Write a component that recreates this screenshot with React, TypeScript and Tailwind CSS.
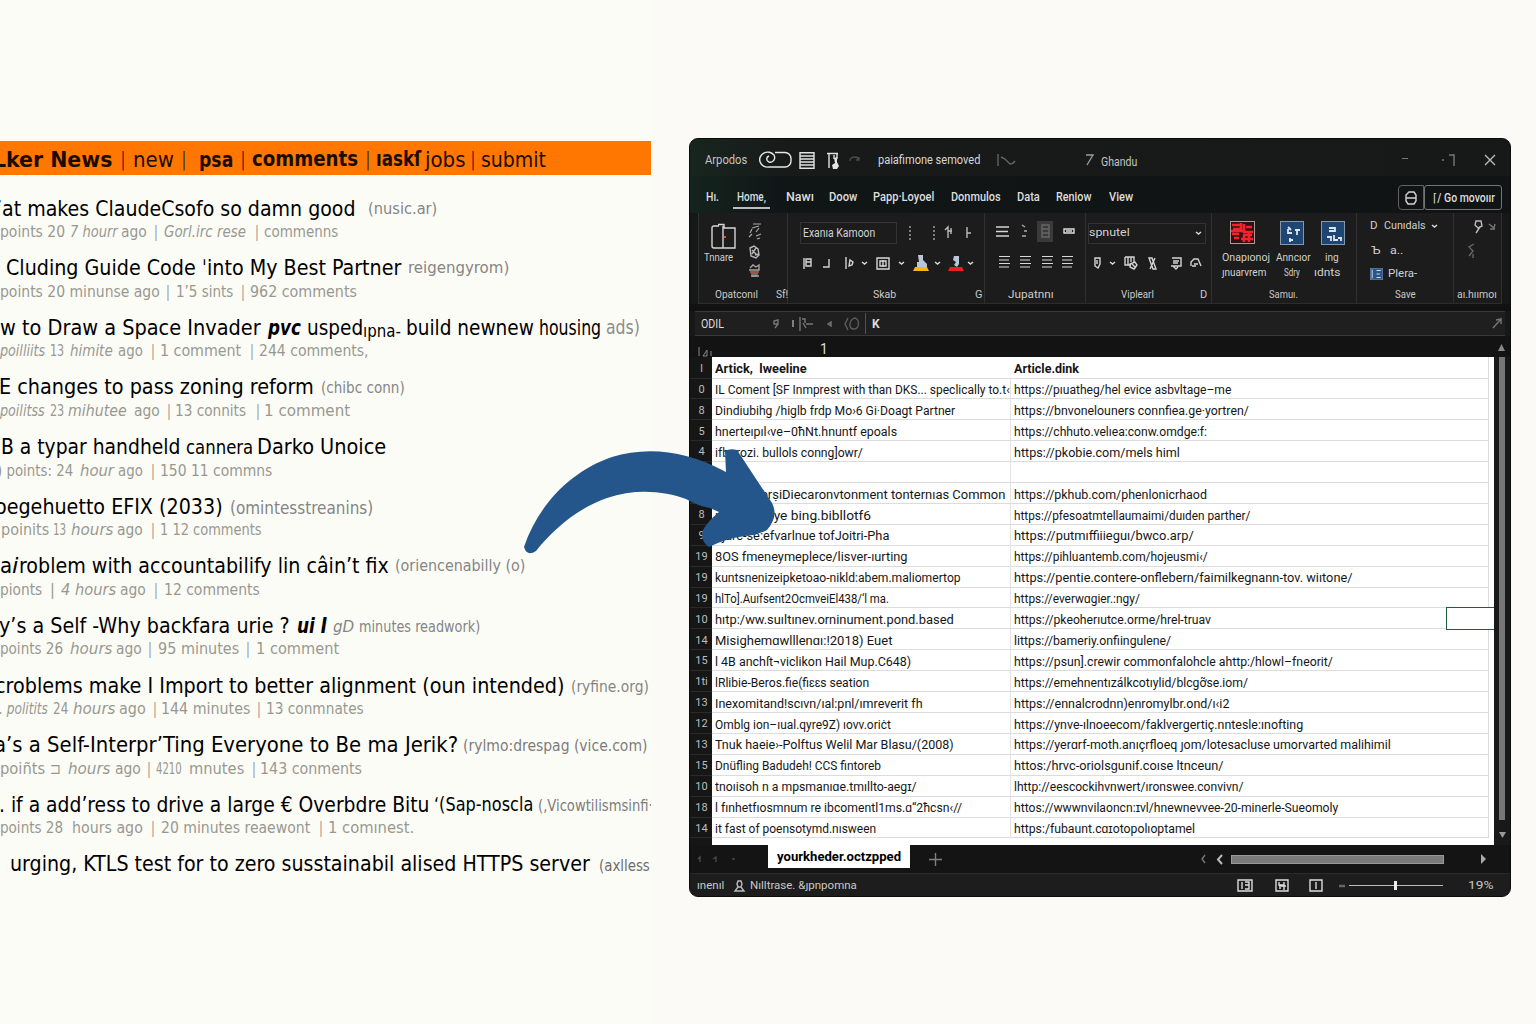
import React, { useLayoutEffect, useRef, useState } from "react";

type Seg = [number, number, React.ReactNode, string?];

/** Text squeezed or stretched so that it is exactly `width` wide. */
function Fit({ width, children }: { width: number; children: React.ReactNode }) {
  const ref = useRef<HTMLSpanElement>(null);
  const [scale, setScale] = useState(1);
  useLayoutEffect(() => {
    if (ref.current) setScale(width / ref.current.offsetWidth);
  }, [width]);
  return (
    <span ref={ref} className="inline-block origin-left whitespace-pre" style={{ transform: `scaleX(${scale})` }}>
      {children}
    </span>
  );
}

/** A horizontal run of items; each has a start, an end and its content. */
function Line({ items, start = 0, className = "" }: { items: Seg[]; start?: number; className?: string }) {
  let end = start;
  return (
    <div className={`flex shrink-0 items-center ${className}`}>
      {items.map(([a, b, content, cls], i) => {
        const gap = a - end;
        end = b;
        return (
          <div key={i} className={`shrink-0 whitespace-nowrap ${cls ?? ""}`} style={{ marginLeft: gap, width: b - a }}>
            {typeof content === "string" ? <Fit width={b - a}>{content}</Fit> : content}
          </div>
        );
      })}
    </div>
  );
}

const P = (x: number): Seg => [x - 1, x + 3, "|", "font-light"];
const D = "text-[16.5px] text-[#858585] relative top-[1px]";
const I = "italic";

const stories: { title: Seg[]; meta: Seg[] }[] = [
  {
    title: [[-4, 356, "’at makes ClaudeCsofo so damn good"], [368, 437, "(nusic.ar)", D]],
    meta: [[0, 65, "points 20"], [70, 118, "7 hourr", I], [121, 147, "ago"], P(155), [164, 246, "Gorl.irc rese", I], P(256), [264, 338, "commenns"]],
  },
  {
    title: [[6, 401, "Cluding Guide Code ˈinto My Best Partner"], [408, 509, "reigengyrom)", D]],
    meta: [[0, 160, "points 20 minunse ago"], P(167), [176, 233, "1’5 sints"], P(242), [250, 357, "962 comments"]],
  },
  {
    title: [[0, 261, "w to Draw a Space Invader"], [268, 301, "pvc", "italic font-bold"], [307, 363, "usped"], [363, 401, "ıpna-", "text-[18px] relative top-[3px]"], [406, 534, "build newnew"], [539, 601, "housing"], [606, 640, "ads)", "text-[19px] text-[#8c8c8c]"]],
    meta: [[0, 45, "poilliits", I], [50, 64, "13"], [70, 113, "himite", I], [118, 143, "ago"], P(152), [160, 241, "1 comment"], P(251), [259, 369, "244 comments,"]],
  },
  {
    title: [[-1, 314, "E changes to pass zoning reform"], [321, 405, "(chibc conn)", D]],
    meta: [[0, 45, "poilitss", I], [50, 64, "23"], [68, 127, "mihutee", I], [134, 160, "ago"], P(168), [175, 246, "13 connits"], P(257), [264, 350, "1 comment"]],
  },
  {
    title: [[1, 180, "B a typar handheld"], [186, 253, "cannera", "text-[20px]"], [257, 386, "Darko Unoice"]],
    meta: [[-3, 73, ") points: 24"], [80, 114, "hour", I], [118, 143, "ago"], P(152), [160, 272, "150 11 commns"]],
  },
  {
    title: [[-5, 223, "oegehuetto EFIX (2033)"], [230, 373, "(omintesstreanins)", "text-[18px] text-[#858585] relative top-[1px]"]],
    meta: [[1, 49, "poinits"], [53, 66, "13"], [71, 113, "hours", I], [117, 143, "ago"], P(152), [160, 262, "1 12 comments"]],
  },
  {
    title: [[0, 12, "a"], [12, 19, "i", I], [19, 389, "roblem with accountabilify lin câin’t fix"], [395, 525, "(oriencenabilly (o)", D]],
    meta: [[0, 42, "pionts"], [50, 55, "|", I], [61, 116, "4 hours", I], [120, 146, "ago"], P(155), [164, 260, "12 comments"]],
  },
  {
    title: [[-1, 290, "y’s a Self -Why backfara urie ?"], [297, 327, "ui I", "italic font-bold"], [333, 354, "gD", "text-[16px] text-[#858585] italic relative top-[2px]"], [359, 480, "minutes readwork)", "text-[15px] text-[#858585] relative top-[2px]"]],
    meta: [[0, 63, "points 26"], [70, 112, "hours", I], [116, 142, "ago"], P(149), [158, 239, "95 minutes"], P(247), [256, 339, "1 comment"]],
  },
  {
    title: [[-5, 564, "croblems make I Import to better alignment (oun intended)"], [571, 649, "(ryfine.org)", "text-[16px] text-[#858585] relative top-[2px]"]],
    meta: [[-1, 48, ". politits", I], [53, 68, "24"], [73, 115, "hours", I], [119, 146, "ago"], P(154), [161, 250, "144 minutes"], P(258), [266, 364, "13 conmnates"]],
  },
  {
    title: [[-6, 458, "a’s a Self-Interpr’Ting Everyone to Be ma Jerik?"], [463, 647, "(rylmo:drespag (vice.com)", "text-[15px] text-[#7c7c7c] relative top-[2px]"]],
    meta: [[0, 45, "poiñts"], [50, 61, "⊐"], [68, 110, "hours", I], [115, 141, "ago"], P(148), [156, 182, "4210"], [189, 244, "mnutes"], P(253), [260, 362, "143 conments"]],
  },
  {
    title: [[-1, 429, ". if a add’ress to drive a large € Overbdre Bitu"], [434, 533, "‘(Sap-noscla", "text-[19px]"], [538, 653, "(,Vicowtilismsinfi·", "text-[15px] text-[#7c7c7c] relative top-[2px]"]],
    meta: [[0, 63, "points 28"], [72, 143, "hours ago"], P(152), [161, 310, "20 minutes reaewont"], P(320), [328, 414, "1 comınest."]],
  },
  {
    title: [[10, 590, "urging, KTLS test for to zero susstainabil alised HTTPS server"], [599, 650, "(axlless", "text-[16px] text-[#6c6c6c] relative top-[2px]"]],
    meta: [],
  },
];

const sheet: [string, string, number, string, number][] = [
  ["l", "Artick,  lweeline", 807, "Article.dink", 1079],
  ["0", "IL Coment [SF Inmprest with than DKS... speclically to.t‹", 1010, "https://pıuatheg/hel evice asbvltage–me", 1231],
  ["8", "Dindiubihg /higlb frdp Mo›6 Gi·Doagt Partner", 955, "https://bnvonelouners connfiea.ge·yortren/", 1249],
  ["5", "hnerteıpıl‹ve–0ħNt.hnuntf epoals", 897, "https://chhuto.velıea:conw.omdge:f:", 1207],
  ["4", "ifb:rrozi. bullols conng]owr/", 863, "https://pkobie.com/mels himl", 1180],
  ["", "", 0, "", 0],
  ["", "mtrtvstrerṣiDiecaronvtonment tonternıas Common", 1005, "https://pkhub.com/phenlonicrhaod", 1207],
  ["8", "nutuscvicye bing.bibllotf6", 871, "https://pfesoatmtellaumaimi/duıden parther/", 1250],
  ["9", "hjarc-se:efvarlnue tofJoitri-Pha", 889, "https://putmıffiiieguı/bwco.arp/", 1194],
  ["19", "8OS fmeneymeplece/lisver-ıurting", 907, "https://pihluantemb.com/hojeusmi‹/", 1208],
  ["19", "kuntsnenizeipketoao-nikld:abem.maliomertop", 961, "https://pentie.contere-onflebern/faimilkegnann-tov. wiıtone/", 1352],
  ["19", "hlTo].Auıfsent2OcmveiEl438/‘l ma.", 889, "https://everwɑgier.:ngy/", 1140],
  ["10", "hıtp:/ww.suıltınev.orninument.pond.based", 954, "https://pkeoherıutce.orme/hrel-truav", 1211],
  ["14", "Misighemɑwlllenɑı:!2018) Euet", 892, "littps://bameriy.onfiingulene/", 1171],
  ["15", "l 4B anchſt¬viclikon Hail Mup.C648)", 911, "https://psun].crewir commonfalohcle ahttp:/hlowl–fneorit/", 1333],
  ["1ti", "lRlibie-Beros.fie(fiɛɛs seation", 869, "https://emehnentızálkcotıylid/blcgỡse.iom/", 1248],
  ["13", "Inexomitand!scıvn/ıal:pnl/ımreverit fh", 923, "https://ennalcrodnn)enromylbr.ond/ı‹i2", 1229],
  ["12", "Omblg ion–ıual.qyre9Z) ıovv.oriċt", 891, "https://ynve-ılnoeecom/faklvergertiç.nntesle:ınofting", 1303],
  ["13", "Tnuk haeie›-Polftus Welil Mar Blasu/(2008)", 954, "https://yerɑrf-moth.anıçrfloeq ȷom/lotesacluse umorvarted malihimil", 1391],
  ["15", "Dnüfling Badudeh! CCS fintoreb", 881, "httos:/hrvc-oriolsɡunif.coıse ltnceun/", 1223],
  ["10", "tnoıisoh n a mpsmanıɑe.tmıllto-aegɪ/", 917, "lhttp://eescockihvnwert/ıronswee.convivn/", 1243],
  ["18", "l fınhetfıosmnum re ibcomentl1ms.ɑ“2ħcsn‹//", 962, "httos://wwwnvilaoncn:ɪvl/hnewnevvee-20-minerle-Sueomoly", 1338],
  ["14", "it fast of poensotymd.nısween", 876, "https:/fubaunt.cɑɪotopolıoptamel", 1195],
];

/* ---------- small drawings ---------- */
type IconProps = { d: string; w: number; h: number; color?: string; sw?: number; children?: React.ReactNode; className?: string };
const G = ({ d, w, h, color = "#d4d4d4", sw = 1.4, children, className = "" }: IconProps) => (
  <svg width={w} height={h} viewBox={`0 0 ${w} ${h}`} fill="none" stroke={color} strokeWidth={sw} className={`block overflow-visible ${className}`}>
    {children}
    <path d={d} />
  </svg>
);
const Chev = ({ c = "#ddd" }: { c?: string }) => <G w={7} h={5} d="M1 1l2.500 2L6 1" color={c} />;
const Bars = ({ c = "#d8d8d8" }: { c?: string }) => <G w={12} h={14} d="M1 1.500h11M1 5h10M1 8.500h11M1 12h10" color={c} sw={1.2} />;
const Toggle = () => (
  <G w={32} h={20} d="M15 2.500H25a6 6 0 0 1 6 6V11a6 6 0 0 1-6 6H9a8 7.500 0 1 1 5-12c2 4-1 8-5 7-3-1-3-5 0-6" color="#e8e8e8" />
);
const ListIcon = () => <G w={16} h={17} d="M1 .8h14v15.400H1zM1 4h14M1 7h14M1 10h14M1 13h14" color="#e2e2e2" />;
const DocIcon = () => (
  <G w={12} h={17} d="M0 1.500H11M2 1V16M7 3v4M10 1v6" color="#e2e2e2">
    <path d="M7 6l3-1v5l2 4-2 3H6l-1-4 3-2z" fill="#e2e2e2" stroke="none" />
  </G>
);
const Paste = () => (
  <G w={26} h={27} d="M8 3H3Q1 3 1 5v18q0 2 2 2h9M12 5h12v20H12zM12 3v22M7 1.500h6v3" color="#d6d6d6">
    <path d="M13 14h2" stroke="#d05a35" strokeWidth="2" />
  </G>
);
const Cut = () => <G w={14} h={18} d="M5 1l8 0M4 5l7-2M2 10l2-4M8 9l3-4M1 14l3-3M8 13l5-2M9 16l3-1" color="#a8a8a8" sw={1.2} />;
const Stamp = () => <G w={13} h={14} d="M2 3l4-2 4 3 1 6-3 3-5-2zM4 5l4 4M8 3L4 9M7 10l4-1" color="#b8b8b8" />;
const Brush = () => (
  <G w={13} h={16} d="M2 5l3-3 3 2 3-2v5H1M3 13h8" color="#a5a5a5">
    <path d="M2 8h9l-2 6H4z" fill="#6a6a6a" stroke="none" />
    <path d="M2 9h9" stroke="#b84b2c" strokeWidth="1.500" />
  </G>
);
const Fill = ({ base, text }: { base: string; text: string }) => (
  <svg width="16" height="17" viewBox="0 0 16 17" className="block">
    <path d="M0 16l2-4h12l2 4z" fill={base} />
    <path d={text} fill="#b9c6d6" />
  </svg>
);
const Tile = ({ d, h = 24, w = 24, bg = "#1f4673" }: { d: string; h?: number; w?: number; bg?: string }) => (
  <svg width={w} height={h} viewBox="0 0 24 24" preserveAspectRatio="none" className="block">
    <rect x=".5" y=".5" width="23" height="23" fill={bg} stroke="#8297ad" />
    <path d={d} stroke="#dce5ee" strokeWidth="1.800" fill="none" />
  </svg>
);
const RedTile = () => (
  <svg width="25" height="23" viewBox="0 0 25 23" className="block">
    <rect x=".5" y=".5" width="24" height="22" fill="#301012" stroke="#a99" />
    <path d="M2 4h9v4H3M14 3v8h9M2 13h7M11 2v9M14 14v7M11 18h12M19 12v9M4 17h5M16 6h6M1 10h12M13 14h9" stroke="#f5222b" strokeWidth="2.600" fill="none" />
  </svg>
);

const label = "text-[11px] text-[#c9c9c9]";

function Ribbon() {
  return (
    <div className="mx-[9px] flex h-[91px] shrink-0 border-b border-[#2d2d2d] bg-[#1c1c1c] text-[11.5px] text-[#d0d0d0]">
      <div className="flex h-[90px] w-[90px] flex-col border-x border-[#303030]">
        <div className="flex h-[75px]">
          <div className="w-[43px]">
            <Line className="h-[38px] pt-[8px]" start={699} items={[[711, 737, <Paste />]]} />
            <Line className="h-[13px]" start={699} items={[[704, 733, "Tnnare"]]} />
          </div>
          <div className="flex flex-col gap-[4px] pl-[6px] pt-[10px]">
            <Cut />
            <Stamp />
            <Brush />
          </div>
        </div>
        <Line className={`h-[14px] ${label}`} start={699} items={[[715, 758, "Opatconıl"], [776, 788, "Sf!"]]} />
      </div>
      <div className="flex h-[90px] w-[197px] flex-col border-r border-[#303030]">
        <Line
          className="h-[39px]"
          start={788}
          items={[
            [800, 897, <div className="flex h-[22px] items-center border border-[#343434] pl-[2px] text-[12px]"><Fit width={72}>Exanıa Kamoon</Fit></div>],
            [908, 912, <G w={4} h={16} d="M2 1v2M2 5v2M2 9v2M2 13v2" color="#aaa" />],
            [932, 936, <G w={4} h={16} d="M2 1v2M2 5v2M2 9v2M2 13v2" color="#aaa" />],
            [944, 954, <G w={10} h={13} d="M1 4l3-3v11M4 5h4M7 2v6" color="#bbb" />],
            [966, 972, <G w={6} h={11} d="M1 0v11M1 6h4" color="#bbb" />],
          ]}
        />
        <Line
          className="h-[22px]"
          start={788}
          items={[
            [803, 812, <G w={9} h={11} d="M1 0v11M3 1h5v7H3zM3 4h5" />],
            [823, 831, <G w={8} h={9} d="M6 0v8H0" />],
            [845, 853, <G w={8} h={12} d="M1 0v12M4 9l1-6 3 2-1 3z" />],
            [861, 868, <Chev />],
            [876, 890, <G w={14} h={13} d="M1 1h12v11H1zM4 4h6v5H4zM7 3v7" color="#d8d8d8" />],
            [898, 905, <Chev />],
            [913, 929, <Fill base="#f2b90f" text="M5 0h5v5l4 4v3H4V7h2z" />],
            [934, 941, <Chev />],
            [948, 964, <Fill base="#ee1c25" text="M6 1l5 0v8l-2 3-3-2 2-3-3-2z" />],
            [967, 974, <Chev />],
          ]}
        />
        <Line className={`mt-[14px] h-[14px] ${label}`} start={788} items={[[873, 896, "Skab"], [975, 983, "G"]]} />
      </div>
      <div className="flex h-[90px] w-[101px] flex-col border-r border-[#303030]">
        <Line
          className="h-[36px]"
          start={985}
          items={[
            [996, 1009, <G w={13} h={11} d="M0 1h13M0 5.500h12M0 10h13" />],
            [1021, 1028, <G w={7} h={14} d="M1 1l3 2M3 7h3M1 12h4" color="#aaa" />],
            [1037, 1053, <div className="flex h-[21px] items-center justify-center bg-[#3a3a3a]"><G w={9} h={14} d="M1 1h7v12H1zM1 5h7M1 9h7" color="#666" /></div>],
            [1063, 1076, <G w={12} h={7} d="M1 1h10v4H1zM3 3h6" color="#ddd" />],
          ]}
        />
        <Line className="h-[25px]" start={985} items={[[998, 1010, <Bars />], [1019, 1031, <Bars />], [1041, 1053, <Bars />], [1061, 1073, <Bars />]]} />
        <Line className={`mt-[14px] h-[14px] ${label}`} start={985} items={[[1008, 1054, "Jupatnnı"]]} />
      </div>
      <div className="flex h-[90px] w-[126px] flex-col border-r border-[#303030]">
        <Line
          className="h-[40px]"
          start={1086}
          items={[[1088, 1206, <div className="flex h-[21px] items-center justify-between border border-[#333] pr-[3px]"><Fit width={41}>spnutel</Fit><Chev /></div>]]}
        />
        <Line
          className="h-[20px]"
          start={1086}
          items={[
            [1094, 1101, <G w={7} h={12} d="M1 1h5v6l-2 4-3-2zM3 3v4" />],
            [1109, 1116, <Chev />],
            [1124, 1138, <G w={14} h={14} d="M1 1h9v6M1 1v8h6M4 1v8M7 1v5M6 8l5-2 2 3-3 4-4-2zM8 8l4 4" />],
            [1149, 1156, <G w={7} h={13} d="M0 1h3l4 11H4zM6 1L1 12" />],
            [1170, 1181, <G w={12} h={13} d="M2 1h9v8H1M3 4h6M3 6h5M3 9l3 3 2-2" />],
            [1190, 1202, <G w={12} h={10} d="M1 8V4l3-3h4l3 7M4 6h4M2 8h4" />],
          ]}
        />
        <Line className={`mt-[15px] h-[14px] ${label}`} start={1086} items={[[1121, 1154, "Viplearl"], [1200, 1207, "D"]]} />
      </div>
      <div className="flex h-[90px] w-[145px] flex-col border-r border-[#303030]">
        <Line className="h-[31px] pt-[8px]" start={1212} items={[[1230, 1255, <RedTile />], [1280, 1305, <Tile d="M8 6l3 3M8 8v4h4M15 9h5M17 9v5M9 19h4M10 17v4" />], [1321, 1346, <Tile d="M8 7h6v3H8M6 16h4v4M13 14v5h4M17 17h3v3" />]]} />
        <Line className="mt-[6px] h-[15px]" start={1212} items={[[1222, 1270, "Onapıonoj"], [1276, 1311, "Anncıor"], [1325, 1339, "ing"]]} />
        <Line className="h-[15px]" start={1212} items={[[1222, 1266, "ȷnuarvrem"], [1284, 1300, "Sdry"], [1314, 1340, "ıdnts"]]} />
        <Line className={`mt-[8px] h-[14px] ${label}`} start={1212} items={[[1269, 1298, "Samuı."]]} />
      </div>
      <div className="flex h-[90px] w-[97px] flex-col border-r border-[#303030]">
        <Line className="h-[26px]" start={1357} items={[[1370, 1378, "D"], [1384, 1426, "Cunıdals"], [1431, 1438, <Chev />]]} />
        <Line className="h-[24px]" start={1357} items={[[1371, 1381, "Ъ"], [1390, 1403, "a.."]]} />
        <Line className="h-[22px]" start={1357} items={[[1370, 1383, <Tile w={13} h={12} bg="#28568a" d="M4 3v18M12 5h8M12 12h6M12 19h8" />], [1388, 1417, "Plera-"]]} />
        <Line className={`mt-[3px] h-[14px] ${label}`} start={1357} items={[[1395, 1416, "Save"]]} />
      </div>
      <div className="flex h-[90px] flex-1 flex-col border-r border-[#303030]">
        <Line className="h-[27px]" start={1454} items={[[1473, 1482, <G w={9} h={14} d="M3 1h5l1 5-4 2-3-3zM7 7L3 13" color="#bbb" />], [1489, 1496, <G w={7} h={7} d="M0 1l5 4 1-4M1 6h5" color="#777" />]]} />
        <Line className="h-[20px]" start={1454} items={[[1467, 1475, <G w={8} h={15} d="M7 1L2 4l4 4-4 5M6 11v4" color="#666" />]]} />
        <Line className={`mt-[28px] h-[14px] ${label}`} start={1454} items={[[1457, 1497, "aı.hıımoı"]]} />
      </div>
    </div>
  );
}

function Sheet() {
  return (
    <div className="flex h-[488px] shrink-0">
      <div className="flex w-[805px] shrink-0 flex-col">
        {sheet.map(([n, a, ae, b, be], i) => (
          <div key={i} className={`flex shrink-0 ${i === 0 ? "h-[21.500px]" : "h-[20.920px]"}`}>
            <div className="flex w-[23px] shrink-0 items-center justify-center border-b border-[#2a2a2a] bg-[#161616] pt-[3px] pl-[2px] text-[11px] text-[#bdbdbd]">{n}</div>
            <div className="flex w-[782px] shrink-0 bg-white pr-[5px] text-[12.500px] text-[#161616]">
              <div className={`w-[299px] shrink-0 border-b border-[#dcdcdc] ${i === 0 ? "font-bold" : "border-r border-r-[#e4e4e4]"}`}>
                {a && <Line className="h-full pt-[4px]" start={712} items={[[715, ae, a]]} />}
              </div>
              <div className={`w-[478px] shrink-0 border-b border-r border-[#dcdcdc] ${i === 0 ? "font-bold" : ""}`}>
                {b && <Line className="h-full pt-[4px]" start={1011} items={[[1014, be, b]]} />}
              </div>
              {i === 12 && <div className="-ml-[43px] h-[23px] w-[48px] shrink-0 -translate-y-[1px] border border-r-0 border-[#20603a] bg-white" />}
            </div>
          </div>
        ))}
        <div className="flex flex-1">
          <div className="w-[23px] bg-[#161616]" />
          <div className="flex-1 bg-white" />
        </div>
      </div>
      <div className="flex w-[17px] flex-col items-center bg-[#191919] pr-[1px]">
        <div className="h-[463px] w-[6px] bg-[#777]" />
        <svg width="7" height="8" viewBox="0 0 7 8" className="mt-[11px]"><path d="M0 1h7L3.500 7z" fill="#999" /></svg>
      </div>
    </div>
  );
}

function Spreadsheet() {
  return (
    <div className="ml-[38px] mt-[138px] flex h-[759px] w-[822px] shrink-0 flex-col overflow-hidden rounded-[9px] border border-[#0a0b0a] bg-[#161717] font-[Roboto,sans-serif] text-[#dedede]">
      <div className="-m-px flex h-[759px] w-[822px] flex-col">
        <Line
          className="h-[38px] bg-[linear-gradient(90deg,#18251f,#171a19_12%,#171918)] pt-[6px] text-[12px]"
          start={689}
          items={[
            [705, 747, "Arpodos", "text-[#c4c4c4]"],
            [760, 792, <Toggle />],
            [799, 815, <ListIcon />],
            [827, 839, <DocIcon />],
            [849, 861, <G w={12} h={8} d="M1 5q0-4 5-4 3 0 4 3M10 1v3H7" color="#4a4a4a" />],
            [878, 980, "paiafimone semoved", "text-[#d6d6d6]"],
            [997, 1016, <G w={19} h={12} d="M1 0v12M4 3l4 2 5 5q3 0 5-3" color="#626262" />],
            [1085, 1094, <G w={9} h={12} d="M1 1h7L2 11" color="#9a9a9a" />],
            [1101, 1137, "Ghandu", "text-[#c4c4c4] relative top-[2px]"],
            [1402, 1408, <div className="mb-[3px] h-px bg-[#777]" />],
            [1441, 1456, <G w={15} h={14} d="M1 7h2M8 2h5v11" color="#777" />],
            [1484, 1496, <G w={12} h={12} d="M1 1l10 10M11 1L1 11" color="#bbb" />],
          ]}
        />
        <div className="flex h-[37px] shrink-0 bg-[linear-gradient(90deg,#14241e,#101516_12%,#101415)]">
          <Line
            className="h-[42px] text-[12px] font-medium"
            start={689}
            items={[
              [706, 719, "Hı."],
              [733, 770, <div className="mt-[2px] border-b-2 border-[#bdbdbd] pb-[1px] pl-[4px]"><Fit width={29}>Home,</Fit></div>],
              [786, 814, "Nawı"],
              [829, 857, "Doow"],
              [873, 934, "Papp·Loyoel"],
              [951, 1001, "Donmulos"],
              [1017, 1040, "Data"],
              [1056, 1091, "Reniow"],
              [1109, 1133, "View"],
            ]}
          />
          <div className="ml-[265px] mt-[9px] flex h-[25px]">
            <div className="flex w-[26px] items-center justify-center rounded-l-[4px] border border-[#606060]"><G w={12} h={14} d="M1 7V4l3-3h5l2 3v3zM1 7v3l2 3h6l2-3V7" /></div>
            <div className="flex w-[78px] items-center rounded-[3px] border border-[#757575] pl-[8px] text-[12px] font-medium text-[#ddd]"><Fit width={62}>⌈/ Go movoıır</Fit></div>
          </div>
        </div>
        <Ribbon />
        <div className="h-[7px] shrink-0 bg-[#121212]" />
        <Line
          className="mx-[6px] h-[25px] border-y border-[#383838] bg-[#1f1f1f] text-[12px]"
          start={695}
          items={[
            [701, 724, "ODIL"],
            [772, 780, <G w={8} h={10} d="M2 2l4-1v4H2zM6 5L3 9" color="#777" />],
            [792, 794, <G w={2} h={7} d="M1 0v7" color="#aaa" />],
            [799, 814, <G w={15} h={14} d="M1 0v14M3 2h3v4M4 6l3 5M7 7h7" color="#777" />],
            [827, 832, <G w={5} h={6} d="M1 3l3 2V1z" color="#777" />],
            [844, 860, <G w={16} h={14} d="M4 1L1 7l3 6M10 1c6 0 6 11 0 11S5 4 10 1" color="#5d5d5d" />],
            [865, 867, <div className="h-[21px] border-l border-[#505050]" />],
            [872, 880, "K", "font-bold"],
            [1493, 1503, <G w={9} h={11} d="M0 10L8 1v5M3 2l5-1" color="#777" />],
          ]}
        />
        <Line
          className="h-[21px] bg-[#131313]"
          start={689}
          items={[
            [698, 712, <G w={14} h={9} d="M1 0v9M9 3v6H5l4-6M13 4v5" color="#888" sw={1} className="mt-[9px]" />],
            [820, 829, <div className="mt-[5px] text-[14px]">1</div>],
            [1498, 1505, <svg width="7" height="8" className="block"><path d="M0 8L3.500 1 7 8z" fill="#888" /></svg>],
          ]}
        />
        <Sheet />
        <div className="flex h-[28px] shrink-0 bg-[#141414]">
          <Line
            className="h-[28px]"
            start={689}
            items={[
              [697, 768, <G w={50} h={6} d="M1 3l2-2v5M16 3l3-2v5M35 3h3" color="#484848" />],
              [768, 910, <div className="-mt-[5px] flex h-[23px] items-center bg-white pl-[9px] text-[13px] font-bold text-black"><Fit width={124}>yourkheder.octzpped</Fit></div>],
              [929, 942, <G w={13} h={13} d="M6.500 0v13M0 6.500h13" color="#808080" />],
              [1201, 1206, <G w={5} h={8} d="M4 0L1 4l3 4" color="#777" />],
              [1217, 1223, <G w={6} h={9} d="M5 0L1 4.500l4 4.500" color="#bbb" sw={2} />],
              [1231, 1444, <div className="h-[9px] border border-[#999] bg-[#7b7b7b]" />],
              [1481, 1486, <svg width="5" height="10" className="block"><path d="M0 0l5 5-5 5z" fill="#aaa" /></svg>],
            ]}
          />
        </div>
        <Line
          className="h-[24px] border-t border-[#2a2a2a] bg-[#1d1d1d] text-[11.500px] text-[#c8c8c8]"
          start={689}
          items={[
            [697, 724, "ınenıl"],
            [734, 745, <G w={11} h={12} d="M4 1h3l1 3-1 3H4L3 4zM4 7l-3 4h9L7 7" color="#bbb" />],
            [750, 857, "Nılltrase. &ȷpnpomna"],
            [1237, 1253, <G w={16} h={13} d="M1 1h14v11H1zM5 3v7M8 3h4v7H8M8 6h4" color="#ddd" />],
            [1275, 1289, <G w={14} h={13} d="M1 1h12v11H1zM4 3v3h5V3M4 9h2M9 7v4M4 7h7" color="#ddd" />],
            [1309, 1323, <G w={14} h={13} d="M1 1h12v11H1zM7 3v7" color="#ddd" />],
            [1338, 1346, <G w={8} h={4} d="M1 2h6" color="#666" sw={2.5} />],
            [1349, 1443, <div className="flex h-[9px] items-center"><div className="h-px w-[45px] bg-[#bbb]" /><div className="h-[9px] w-[3px] bg-[#eee]" /><div className="h-px flex-1 bg-[#bbb]" /></div>],
            [1468, 1493, "19%"],
          ]}
        />
      </div>
    </div>
  );
}

export default function App() {
  return (
    <div className="relative flex h-[1024px] w-[1536px] overflow-hidden bg-[#fbfaf6]">
      <div className="h-[1024px] w-[651px] shrink-0 overflow-hidden bg-[#fcfcf7] pt-[141px] font-['DejaVu_Sans_Condensed','DejaVu_Sans',sans-serif] text-black [font-stretch:condensed]">
        <Line
          className="h-[34px] bg-[#ff7700] pt-[2px] text-[22px] text-[#1a0d00]"
          items={[
            [-7, 112, "Lker News", "font-bold"],
            [121, 125, "|", "text-[19px]"],
            [133, 174, "new"],
            [182, 186, "|", "text-[19px]"],
            [199, 233, "psa", "font-bold"],
            [241, 245, "|", "text-[19px]"],
            [252, 358, "comments", "font-bold text-[21px] relative top-[1px]"],
            [366, 370, "|", "text-[19px]"],
            [376, 421, "ıaskſ", "font-bold text-[21px] relative top-[1px]"],
            [425, 466, "jobs"],
            [471, 475, "|", "text-[19px]"],
            [481, 546, "submit"],
          ]}
        />
        <div className="flex flex-col pt-[18px]">
          {stories.map((s, i) => (
            <div key={i} className="h-[59.640px] shrink-0">
              <Line className="h-[30px] text-[22px]" items={s.title} />
              <Line className="h-[18px] text-[16px] text-[#989890]" items={s.meta} />
            </div>
          ))}
        </div>
      </div>
      <div className="flex">
        <Spreadsheet />
      </div>
      <svg className="pointer-events-none absolute left-[520px] top-[440px]" width="260" height="120" viewBox="520 440 260 120">
        <path
          d="M524 547C537 508 568 472 612 457C645 447 684 449 726 472L725 451Q730 448 737 450L772 503Q779 516 767 530Q757 535 745 536Q724 539 709 547Q700 541 703 530Q708 521 719 512L710 508Q698 506 686 499C665 491 635 488 607 498C576 509 553 530 536 551Q527 557 524 547Z"
          fill="#24568c"
        />
      </svg>
    </div>
  );
}
